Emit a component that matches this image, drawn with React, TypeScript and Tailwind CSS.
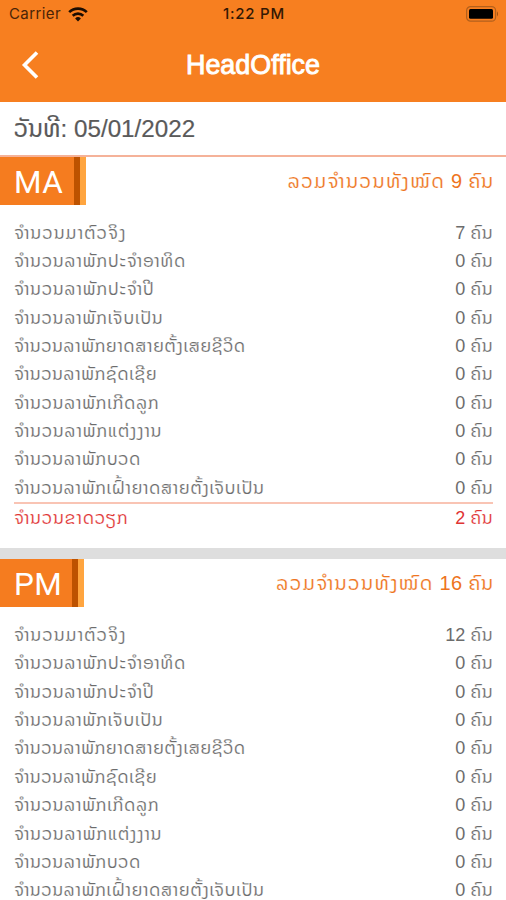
type Row = { label: string; tracking: string; count: number };

const lao = "font-['Liberation_Sans','Noto_Sans_Lao','DejaVu_Sans',sans-serif]";

const labels: [string, string][] = [
  ['ຈຳນວນມາຕົວຈິງ', 'tracking-[0.85px]'],
  ['ຈຳນວນລາພັກປະຈຳອາທິດ', 'tracking-[0.55px]'],
  ['ຈຳນວນລາພັກປະຈຳປີ', 'tracking-[0.55px]'],
  ['ຈຳນວນລາພັກເຈັບເປັນ', 'tracking-[0.5px]'],
  ['ຈຳນວນລາພັກຍາດສາຍຕັ້ງເສຍຊີວິດ', 'tracking-[0.3px]'],
  ['ຈຳນວນລາພັກຊົດເຊີຍ', 'tracking-[0.3px]'],
  ['ຈຳນວນລາພັກເກີດລູກ', 'tracking-[0.45px]'],
  ['ຈຳນວນລາພັກແຕ່ງງານ', 'tracking-[0.55px]'],
  ['ຈຳນວນລາພັກບວດ', 'tracking-[0.4px]'],
  ['ຈຳນວນລາພັກເຝົ້າຍາດສາຍຕັ້ງເຈັບເປັນ', 'tracking-[0.36px]'],
];

const rowsFor = (present: number): Row[] =>
  labels.map(([label, tracking], i) => ({ label, tracking, count: i === 0 ? present : 0 }));

function StatusBar() {
  return (
    <div className="grid h-7 grid-cols-3 items-center pr-[7px] pl-[9px] [font-family:Inter,sans-serif] text-[15px] text-[#4a2407]">
      <div className="flex items-center gap-[7px]">
        <span className="tracking-[0.4px]">Carrier</span>
        <svg width="20" height="15" viewBox="0 0 20 15" fill="none" stroke="#1c0d02" strokeWidth="2.6">
          <path d="M1.2 5.2a12.5 12.5 0 0 1 17.6 0" />
          <path d="M4.7 8.8a7.6 7.6 0 0 1 10.6 0" />
          <path d="M10 14.4 7.1 11.5a4.2 4.2 0 0 1 5.8 0Z" fill="#1c0d02" stroke="none" />
        </svg>
      </div>
      <span className="text-center font-medium tracking-[0.75px] text-[#331804]">1:22 PM</span>
      <svg className="justify-self-end" width="33" height="16" viewBox="0 0 33 16">
        <rect x=".6" y=".6" width="29" height="14.6" rx="4" fill="none" stroke="#b3601c" strokeWidth="1.2" />
        <rect x="3" y="3" width="24" height="9.8" rx="1.5" fill="#000" />
        <path d="M31 5.2q2 2.7 0 5.4Z" fill="#a0500f" />
      </svg>
    </div>
  );
}

function Count({ value }: { value: number }) {
  return (
    <span className="whitespace-pre">
      {value} <span className="tracking-[0.3px] [-webkit-text-stroke:0.2px_white]">ຄົນ</span>
    </span>
  );
}

function Section({ name, total, rows, missing, tagWidth }: { name: string; total: number; rows: Row[]; missing: number; tagWidth: string }) {
  return (
    <section>
      <div className="flex h-[48px] justify-between">
        <div className={`flex ${tagWidth} items-center border-r-[6px] border-[#ffa53f] bg-[#f57c1f]`}>
          <span className="flex-1 pt-[3px] pl-[14px] [font-family:Roboto,sans-serif] text-[31.5px] leading-none tracking-[0.4px] text-white">{name}</span>
          <div className="h-full w-[6px] bg-[#bd5200]" />
        </div>
        <div className="flex h-[48px] items-center pr-[12px] text-[20px] whitespace-pre text-[#ee7420]">
          <span className="tracking-[1.2px] [-webkit-text-stroke:0.2px_white]">ລວມຈຳນວນທັງໝົດ</span>
          <span className="tracking-[0.3px]"> {total} </span>
          <span className="tracking-[0.6px] [-webkit-text-stroke:0.2px_white]">ຄົນ</span>
        </div>
      </div>
      <div className="pt-[14px] pr-[13px] pl-[14px] text-[18px] text-[#6c6c6c]">
        {rows.map((r) => (
          <div key={r.label} className="flex h-[28.35px] items-center justify-between whitespace-nowrap">
            <span className={`${r.tracking} [-webkit-text-stroke:0.2px_white]`}>{r.label}</span>
            <Count value={r.count} />
          </div>
        ))}
        <div className="flex h-[30px] items-center justify-between border-t-2 border-[#f9c4b4] text-[#df3434]">
          <span className="tracking-[0.6px] [-webkit-text-stroke:0.2px_white]">ຈຳນວນຂາດວຽກ</span>
          <Count value={missing} />
        </div>
      </div>
    </section>
  );
}

export default function App() {
  return (
    <main className={`h-[900px] w-[506px] overflow-hidden bg-white ${lao}`}>
      <header className="h-[102px] bg-[#f77f20]">
        <StatusBar />
        <div className="grid h-[74px] grid-cols-[60px_1fr_60px] items-center text-white">
          <svg className="ml-[21px]" width="18" height="28" viewBox="0 0 18 28" fill="none" stroke="white" strokeWidth="3.6">
            <path d="M16 1.5 3.5 14 16 26.5" />
          </svg>
          <h1 className="text-center text-[26.9px] leading-none [-webkit-text-stroke:0.9px_white]">HeadOffice</h1>
        </div>
      </header>
      <div className="flex h-[55px] items-center border-b-2 border-[#f5b299] pt-[2px] pl-[14px] text-[24.2px] whitespace-pre text-[#5a5a5a] [-webkit-text-stroke:0.2px_#5a5a5a]">
        ວັນທີ: 05/01/2022
      </div>
      <Section name="MA" total={9} rows={rowsFor(7)} missing={2} tagWidth="w-[86px]" />
      <div className="mt-[16px] h-[11px] bg-[#dedede]" />
      <Section name="PM" total={16} rows={rowsFor(12)} missing={2} tagWidth="w-[84px]" />
    </main>
  );
}
